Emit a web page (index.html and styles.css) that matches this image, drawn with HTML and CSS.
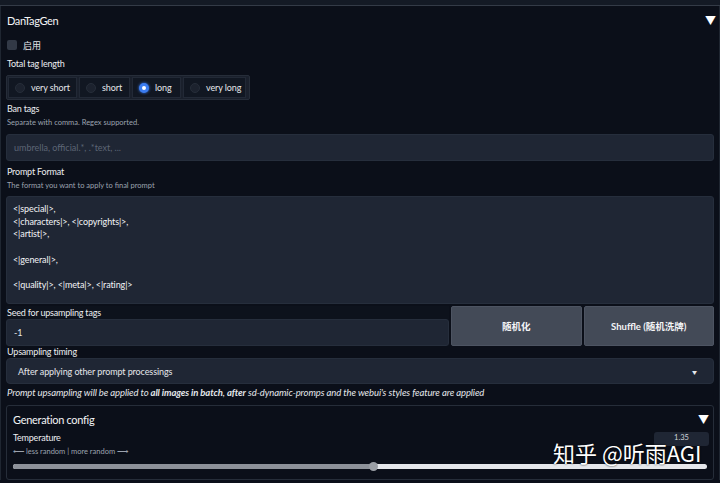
FILE: index.html
```html
<html>

<head>
  <link rel="stylesheet" href="styles.css">
</head>

<body>
  <div class="topbar"></div>
  <div class="panel">
    <div class="panel-head">
      <span>DanTagGen</span>
      <span class="caret main-caret">&#9660;</span>
    </div>

    <label class="check-row">
      <span class="checkbox"></span>
      <span>启用</span>
    </label>

    <div class="label">Total tag length</div>
    <div class="radio-group">
      <div class="radio"><span class="dot"></span>very short</div>
      <div class="radio"><span class="dot"></span>short</div>
      <div class="radio selected"><span class="dot"></span>long</div>
      <div class="radio"><span class="dot"></span>very long</div>
    </div>

    <div class="label ban">Ban tags</div>
    <div class="info">Separate with comma. Regex supported.</div>
    <div class="input placeholder">umbrella, official.*, .*text, ...</div>

    <div class="label">Prompt Format</div>
    <div class="info">The format you want to apply to final prompt</div>
    <div class="textarea">&lt;|special|&gt;,
&lt;|characters|&gt;, &lt;|copyrights|&gt;,
&lt;|artist|&gt;,

&lt;|general|&gt;,

&lt;|quality|&gt;, &lt;|meta|&gt;, &lt;|rating|&gt;</div>

    <div class="seed-row">
      <div class="seed">
        <div class="label">Seed for upsampling tags</div>
        <div class="input">-1</div>
      </div>
      <button class="btn">随机化</button>
      <button class="btn">Shuffle (随机洗牌)</button>
    </div>

    <div class="label timing">Upsampling timing</div>
    <div class="dropdown">
      <span>After applying other prompt processings</span>
      <span class="dd-caret">&#9660;</span>
    </div>

    <div class="note">Prompt upsampling will be applied to <b>all images in batch</b>, <b>after</b> sd-dynamic-promps and the webui's styles feature are applied</div>

    <div class="sub-panel">
      <div class="panel-head sub-head">
        <span>Generation config</span>
        <span class="caret">&#9660;</span>
      </div>
      <div class="slider-head">
        <div>
          <div class="label">Temperature</div>
          <div class="info">&#10229; less random | more random &#10230;</div>
        </div>
        <div class="number">1.35</div>
      </div>
      <div class="slider">
        <div class="fill" style="width: 52%"></div>
        <div class="thumb"></div>
      </div>
    </div>
  </div>
  <div class="watermark">知乎 @听雨AGI</div>
</body>

</html>
```

FILE: styles.css
```css
body {
  margin: 0;
  padding: 0;
  background: #0b0f19;
  color: #e5e7eb;
  font-family: 'Lato', 'Noto Sans CJK SC', sans-serif;
  font-size: 9px;
  overflow: hidden;
  position: relative;
  height: 483px;
}

.topbar {
  height: 5px;
  background: #141a25;
  border-bottom: 1px solid #343b47;
}

.panel {
  padding: 0 5px 0 5px;
  border-left: 1px solid #1f2631;
  border-right: 1px solid #1f2631;
  display: flex;
  flex-direction: column;
}

.panel-head {
  height: 28px;
  display: flex;
  align-items: center;
  justify-content: space-between;
  font-size: 11px;
  letter-spacing: -0.4px;
  color: #f3f4f6;
  padding-left: 1px;
}

.caret {
  font-size: 11px;
  color: #fff;
  letter-spacing: 0;
}

.main-caret {
  margin-right: -2px;
}

.check-row {
  display: flex;
  align-items: center;
  gap: 6px;
  height: 16px;
  margin-top: 3px;
  padding-left: 1px;
  font-size: 9px;
  color: #e5e7eb;
}

.checkbox {
  width: 10px;
  height: 10px;
  border-radius: 2px;
  background: #323946;
}

.label {
  color: #eceef1;
  font-size: 9px;
  letter-spacing: -0.2px;
  line-height: 12px;
  padding-left: 1px;
  margin-top: 5px;
}

.info {
  color: #9ca3af;
  font-size: 7.5px;
  line-height: 11px;
  padding-left: 1px;
  margin-top: 2px;
}

.radio-group {
  display: flex;
  width: 240px;
  height: 21px;
  margin-top: 5px;
  padding: 1px;
  gap: 2px;
  background: #1a202c;
  border: 1px solid #262d39;
  border-radius: 2px;
}

.radio {
  display: flex;
  align-items: center;
  gap: 6px;
  padding: 0 6px;
  box-sizing: border-box;
  white-space: nowrap;
  background: #111722;
  border: 1px solid #222936;
  color: #e5e7eb;
  font-size: 9px;
  letter-spacing: -0.1px;
}

.radio:nth-child(1) { width: 69px; }
.radio:nth-child(2) { width: 51px; }
.radio:nth-child(3) { width: 49px; }
.radio:nth-child(4) { width: 63px; }

.dot {
  width: 10px;
  height: 10px;
  flex: none;
  border-radius: 50%;
  background: #1c222e;
  border: 1px solid #262d39;
  box-sizing: border-box;
}

.radio.selected .dot {
  background: #fff;
  border: 3px solid #3b7cf0;
  box-shadow: 0 0 3px #3b7cf0;
}

.ban {
  margin-top: 3px;
}

.input {
  height: 27px;
  margin-top: 6px;
  background: #1f2634;
  border: 1px solid #262e3c;
  border-radius: 3px;
  box-sizing: border-box;
  display: flex;
  align-items: center;
  padding-left: 7px;
  color: #e5e7eb;
  font-size: 9px;
}

.placeholder {
  color: #5d6574;
}

.textarea {
  height: 108px;
  margin-top: 5px;
  background: #1f2634;
  border: 1px solid #262e3c;
  border-radius: 3px;
  box-sizing: border-box;
  padding: 6px 6px;
  white-space: pre;
  font-size: 9px;
  letter-spacing: -0.1px;
  line-height: 12.7px;
  color: #f3f4f6;
}

.seed-row {
  display: flex;
  gap: 2px;
  height: 40px;
  margin-top: 2px;
}

.seed {
  width: 443px;
  display: flex;
  flex-direction: column;
  background: #0d121c;
}

.seed .label {
  margin-top: 0;
  line-height: 13px;
}

.seed .input {
  margin-top: 0;
  height: 27px;
}

.btn {
  flex: 1;
  background: #434a57;
  border: 1px solid #4d5462;
  border-radius: 2px;
  color: #f3f4f6;
  font-family: 'Lato', 'Noto Sans CJK SC', sans-serif;
  font-size: 9.5px;
  font-weight: bold;
}

.timing {
  margin-top: 0;
}

.dropdown {
  height: 26px;
  background: #1f2634;
  border: 1px solid #262e3c;
  border-radius: 4px;
  box-sizing: border-box;
  display: flex;
  align-items: center;
  justify-content: space-between;
  padding: 0 16px 0 11px;
  font-size: 9px;
  letter-spacing: -0.1px;
  color: #e5e7eb;
}

.dd-caret {
  font-size: 5px;
}

.note {
  font-style: italic;
  font-size: 9.5px;
  letter-spacing: -0.1px;
  line-height: 12px;
  margin-top: 3px;
  padding-left: 1px;
  color: #e5e7eb;
}

.sub-panel {
  margin-top: 6px;
  height: 75px;
  box-sizing: border-box;
  border: 1px solid #262d39;
  border-radius: 3px;
  padding: 0 4px 0 5px;
}

.sub-head {
  height: 26px;
  font-size: 11px;
  letter-spacing: -0.3px;
}

.slider-head {
  display: flex;
  justify-content: space-between;
}

.slider-head .label {
  margin-top: 0;
}

.number {
  width: 55px;
  height: 14px;
  background: #1f2634;
  border-radius: 3px;
  color: #d1d5db;
  font-size: 7.5px;
  text-align: center;
  line-height: 12px;
}

.slider {
  position: relative;
  height: 5px;
  margin: 7px 2px 0 1px;
  background: #e5e7eb;
  border-radius: 3px;
}

.fill {
  height: 5px;
  background: #8d9199;
  border-radius: 3px;
}

.thumb {
  position: absolute;
  left: 52%;
  top: -2px;
  width: 9px;
  height: 9px;
  margin-left: -5px;
  border-radius: 50%;
  background: #9a9ea5;
}

.watermark {
  position: absolute;
  left: 553px;
  top: 436px;
  font-family: 'Noto Sans CJK SC', sans-serif;
  font-size: 22px;
  color: #fff;
  text-shadow: 0 0 2px #000;
}
```
